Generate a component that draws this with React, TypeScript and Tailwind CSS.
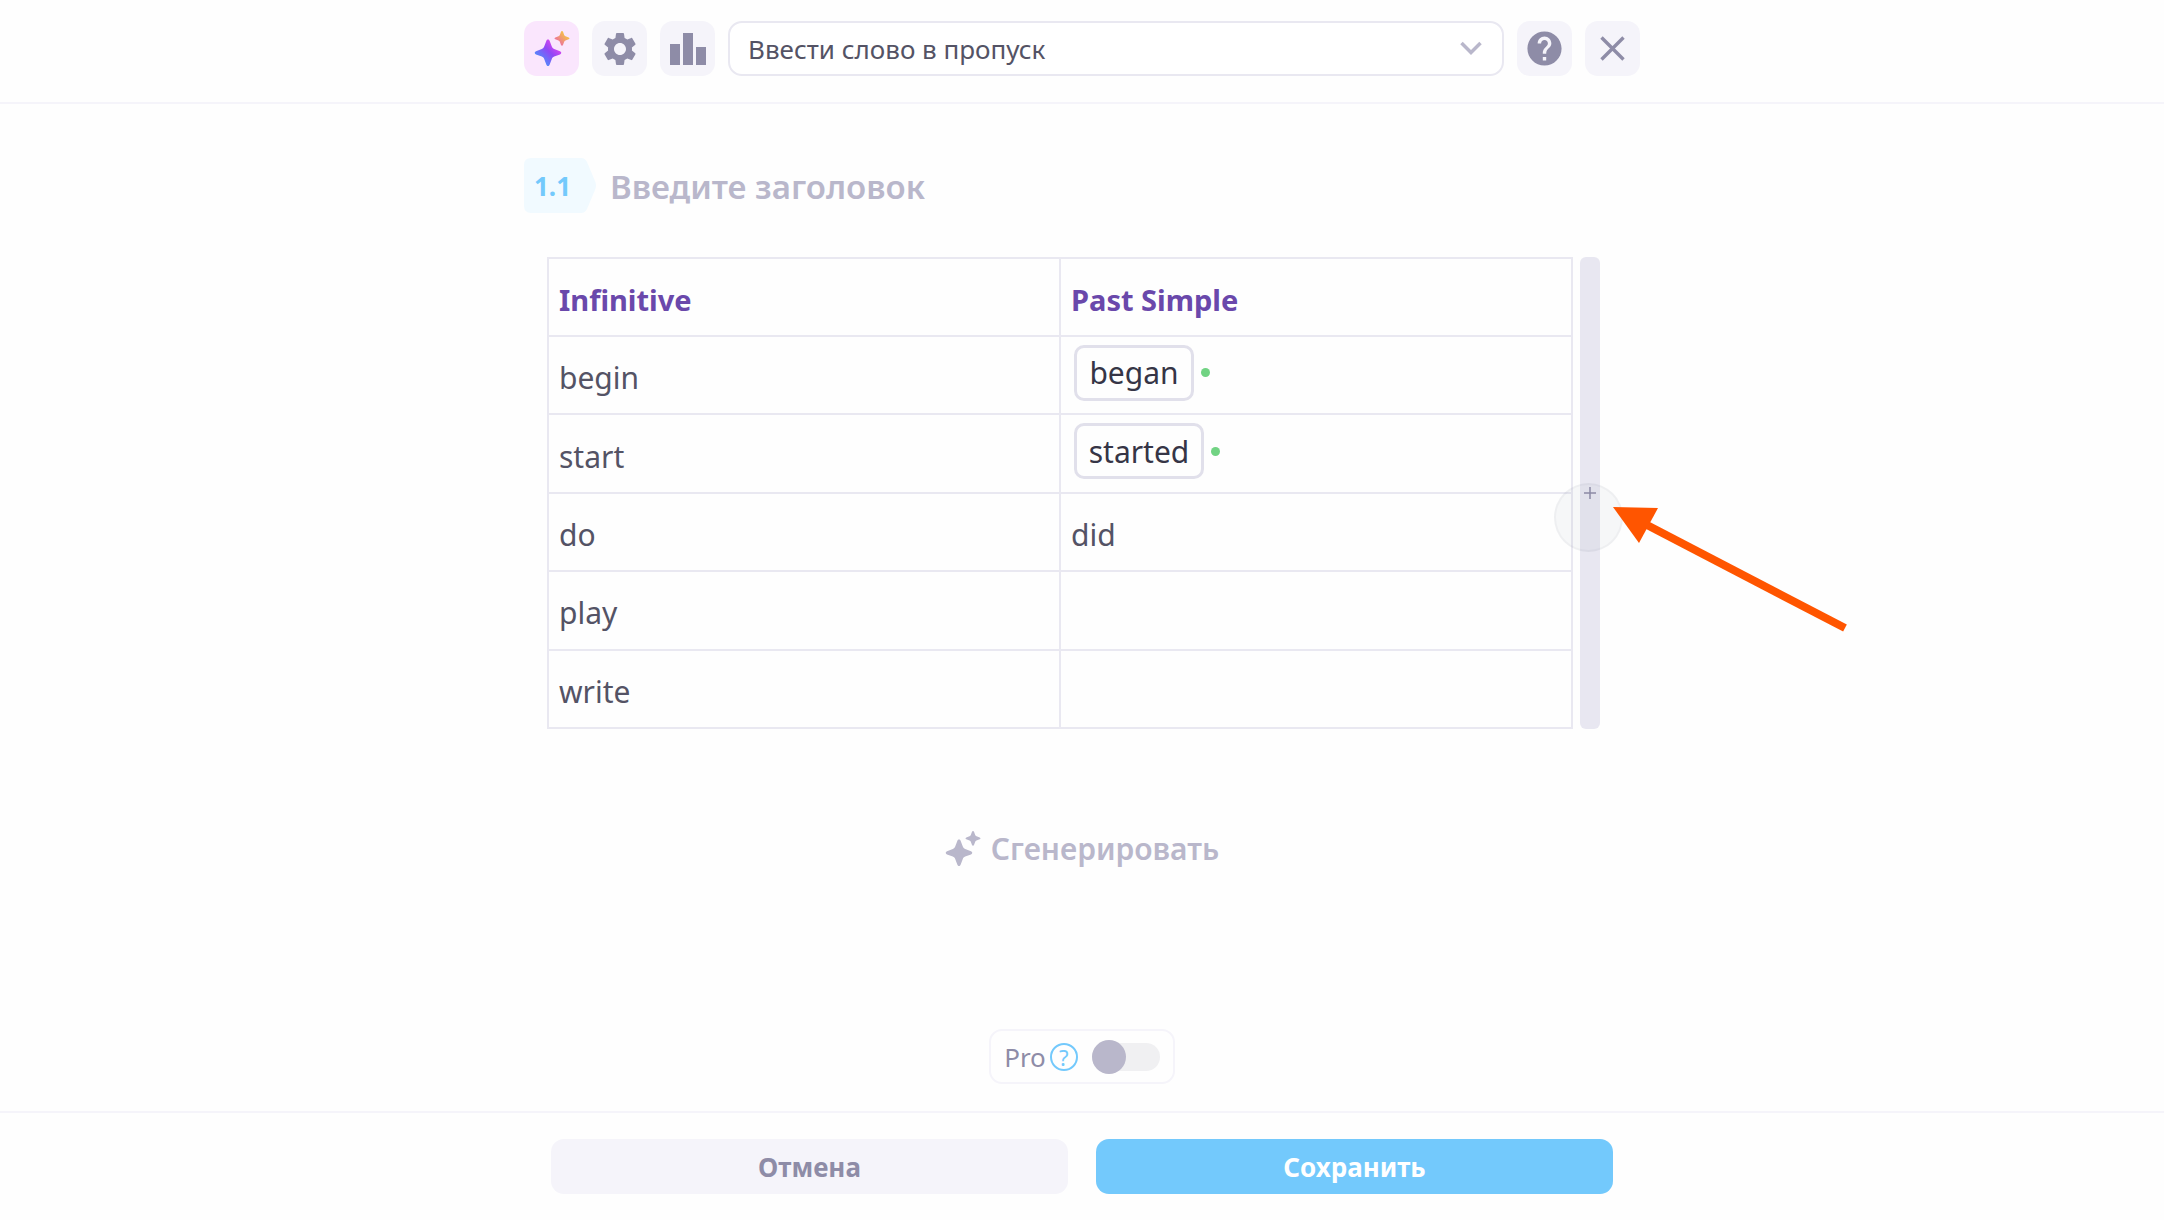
import { useState } from "react";
import type { ReactNode } from "react";

type Row = { infinitive: string; past: string; gap?: boolean };

const rows: Row[] = [
  { infinitive: "begin", past: "began", gap: true },
  { infinitive: "start", past: "started", gap: true },
  { infinitive: "do", past: "did" },
  { infinitive: "play", past: "" },
  { infinitive: "write", past: "" },
];

const iconColor = "#8e8ca7";

function IconButton({ label, className = "bg-[#f5f4fa]", children }: { label: string; className?: string; children: ReactNode }) {
  return (
    <button
      type="button"
      aria-label={label}
      className={`flex h-[55px] w-[55px] shrink-0 items-center justify-center rounded-[13px] ${className}`}
    >
      {children}
    </button>
  );
}

function Sparkles({ big, small }: { big: string; small: string }) {
  return (
    <svg width="36" height="36" viewBox="0 0 36 36" aria-hidden="true">
      <defs>
        <linearGradient id="spark-big" x1="0" y1="1" x2="1" y2="0">
          <stop offset="0.2" stopColor="#4f8dfb" />
          <stop offset="0.55" stopColor="#9147f5" />
          <stop offset="0.8" stopColor="#d946ef" />
        </linearGradient>
        <linearGradient id="spark-small" x1="0" y1="1" x2="1" y2="0">
          <stop offset="0.2" stopColor="#ec6f9f" />
          <stop offset="0.8" stopColor="#f5c542" />
        </linearGradient>
      </defs>
      <path
        d="M14 8.500c.8 0 1.300.5 1.600 1.300l2.200 5.800c.5 1.300 1.100 1.900 2.400 2.400l5.800 2.200c1.700.6 1.700 2.600 0 3.200l-5.800 2.200c-1.300.5-1.900 1.100-2.400 2.400l-2.200 5.800c-.6 1.700-2.600 1.700-3.200 0l-2.200-5.800c-.5-1.300-1.100-1.900-2.400-2.400l-5.800-2.200c-1.700-.6-1.700-2.600 0-3.200l5.800-2.200c1.300-.5 1.900-1.100 2.400-2.400l2.200-5.800c.3-.8.8-1.300 1.600-1.300z"
        fill={big}
      />
      <path
        d="M28 0c.5 0 .8.300 1 .800l1.200 3.200c.3.700.6 1 1.300 1.300l3.200 1.200c1 .4 1 1.400 0 1.800l-3.200 1.200c-.7.300-1 .6-1.300 1.300l-1.200 3.200c-.4 1-1.600 1-2 0l-1.200-3.200c-.3-.7-.6-1-1.300-1.300l-3.200-1.200c-1-.4-1-1.400 0-1.800l3.200-1.200c.7-.3 1-.6 1.300-1.300l1.200-3.200c.2-.5.5-.8 1-.8z"
        fill={small}
      />
    </svg>
  );
}

function Header() {
  return (
    <header className="border-b-2 border-[#f5f4fa] px-4 pt-[21px] pb-[26px]">
      <div className="mx-auto flex max-w-[1116px] items-center gap-[13px]">
        <IconButton label="Сгенерировать с ИИ" className="bg-[#fae6fd]">
          <Sparkles big="url(#spark-big)" small="url(#spark-small)" />
        </IconButton>
        <IconButton label="Настройки">
          <svg width="40" height="40" viewBox="0 0 24 24" fill={iconColor} aria-hidden="true">
            <path d="M19.140 12.940c.04-.3.060-.61.060-.94 0-.32-.02-.64-.07-.94l2.030-1.580c.18-.14.230-.41.120-.61l-1.920-3.320c-.12-.22-.37-.29-.59-.22l-2.390.96c-.5-.38-1.030-.7-1.620-.94l-.36-2.540c-.04-.24-.24-.41-.48-.41h-3.840c-.24 0-.43.170-.47.410l-.36 2.540c-.59.240-1.130.570-1.620.940l-2.390-.96c-.22-.08-.47 0-.59.220L2.740 8.870c-.12.210-.08.470.120.610l2.030 1.580c-.05.300-.09.630-.09.940s.02.640.07.940l-2.030 1.580c-.18.140-.23.410-.12.610l1.920 3.320c.12.220.37.290.59.220l2.390-.96c.5.380 1.030.7 1.620.940l.36 2.540c.05.240.24.410.48.410h3.840c.24 0 .44-.17.47-.41l.36-2.540c.59-.24 1.130-.56 1.620-.94l2.390.96c.22.080.47 0 .59-.22l1.920-3.320c.12-.22.070-.47-.12-.61l-2.010-1.580zM12 15.600c-1.980 0-3.600-1.620-3.600-3.600s1.620-3.600 3.600-3.600 3.600 1.620 3.600 3.600-1.620 3.600-3.600 3.600z" />
          </svg>
        </IconButton>
        <IconButton label="Статистика">
          <svg width="36" height="32" viewBox="0 0 36 32" fill={iconColor} aria-hidden="true">
            <path d="M0 11h10v21H0zM13 0h10v32H13zM26 14h10v18H26z" />
          </svg>
        </IconButton>
        <div className="relative min-w-0 flex-1">
          <select
            aria-label="Тип задания"
            className="h-[55px] w-full appearance-none rounded-[14px] border-2 border-[#e9e8f1] bg-white pt-[2px] pr-14 pl-[18px] text-[26px] text-[#545365]"
          >
            <option>Ввести слово в пропуск</option>
          </select>
          <svg className="pointer-events-none absolute top-[20px] right-[22px]" width="22" height="15" viewBox="0 0 22 15" fill="none" aria-hidden="true">
            <path d="M1.500 2l9.500 9.500L20.500 2" stroke="#b9b7cb" strokeWidth="3.500" />
          </svg>
        </div>
        <IconButton label="Помощь">
          <svg width="41" height="41" viewBox="0 0 24 24" fill={iconColor} aria-hidden="true">
            <path d="M12 2C6.480 2 2 6.480 2 12s4.480 10 10 10 10-4.480 10-10S17.520 2 12 2zm1 17h-2v-2h2v2zm2.070-7.750l-.9.920C13.450 12.900 13 13.500 13 15h-2v-.5c0-1.100.45-2.100 1.170-2.830l1.240-1.260c.37-.36.590-.86.590-1.410 0-1.100-.9-2-2-2s-2 .9-2 2H8c0-2.210 1.790-4 4-4s4 1.790 4 4c0 .88-.36 1.680-.93 2.250z" />
          </svg>
        </IconButton>
        <IconButton label="Закрыть">
          <svg width="25" height="25" viewBox="0 0 25 25" fill="none" aria-hidden="true">
            <path d="M1.500 1.500l22 22M23.500 1.500l-22 22" stroke={iconColor} strokeWidth="3.400" />
          </svg>
        </IconButton>
      </div>
    </header>
  );
}

function GapInput({ word }: { word: string }) {
  return (
    <div className="flex items-center gap-[7px] pb-[5px] pl-[3px]">
      <input
        aria-label="Правильный ответ"
        defaultValue={word}
        className={`h-[56px] rounded-[10px] border-[3px] border-[#e1e0eb] text-center text-[#363546] ${word.length > 5 ? "w-[130px]" : "w-[120px]"}`}
      />
      <span className="h-[9px] w-[9px] rounded-full bg-[#71d383]" />
    </div>
  );
}

function VerbTable() {
  return (
    <div className="relative mt-[44px] mr-10 ml-[23px] flex gap-[7px]">
      <div className="min-w-0 flex-1">
        <table className="h-[472px] w-full table-fixed border-collapse text-left text-[30px] leading-10 text-[#545365]">
          <thead>
            <tr className="h-[78px] text-[29px] text-[#6a48ab]">
              <th className="border-2 border-[#e9e8f1] px-[10px] pt-[6px] font-bold">Infinitive</th>
              <th className="border-2 border-[#e9e8f1] px-[10px] pt-[6px] font-bold">Past Simple</th>
            </tr>
          </thead>
          <tbody>
            {rows.map((row) => (
              <tr key={row.infinitive} className="h-[78px]">
                <td className="border-2 border-[#e9e8f1] px-[10px] pt-[6px]">{row.infinitive}</td>
                <td className="border-2 border-[#e9e8f1] px-[10px]">
                  {row.gap ? <GapInput word={row.past} /> : <p className="pt-[6px]">{row.past}</p>}
                </td>
              </tr>
            ))}
          </tbody>
        </table>
      </div>
      <button type="button" aria-label="Добавить столбец" className="flex w-5 items-center justify-center rounded-[6px] bg-[#e8e7f1]">
        <svg width="12" height="12" viewBox="0 0 12 12" aria-hidden="true">
          <path d="M6 0v12M0 6h12" stroke={iconColor} strokeWidth="1.500" />
        </svg>
      </button>

      {/* click highlight and the arrow pointing to it */}
      <span className="pointer-events-none absolute top-[226px] right-[-23px] h-[69px] w-[69px] rounded-full border-2 border-[#5a6478]/5 bg-[#5a6e8c]/5" />
      <svg className="pointer-events-none absolute top-[249px] left-full ml-[13px]" width="236" height="128" viewBox="0 0 236 128" aria-hidden="true">
        <path d="M0 1l45 1-19 35z" fill="#ff5500" />
        <path d="M34 19l198 103" stroke="#ff5500" strokeWidth="8" />
      </svg>
    </div>
  );
}

function ProSwitch() {
  const [pro, setPro] = useState(false);

  return (
    <div className="flex h-[55px] items-center rounded-[13px] border-2 border-[#f5f4fa] px-[13px]">
      <label htmlFor="pro" className="pt-[2px] text-[26px] text-[#8e8ca7]">
        Pro
      </label>
      <button
        type="button"
        aria-label="Что такое Pro"
        className="ml-1 flex h-[28px] w-[28px] items-center justify-center rounded-full border-2 border-[#73c9fc] text-[22px] leading-none text-[#73c9fc]"
      >
        ?
      </button>
      <span className="relative ml-[14px] flex h-[34px] w-[68px] items-center">
        <span className="h-[28px] w-full rounded-full bg-[#f0f0f2]" />
        <input
          id="pro"
          type="checkbox"
          role="switch"
          checked={pro}
          onChange={(e) => setPro(e.target.checked)}
          className="absolute left-0 h-[34px] w-[34px] appearance-none rounded-full bg-[#b9b7cb] checked:left-[34px] checked:bg-[#73c9fc]"
        />
      </span>
    </div>
  );
}

export default function App() {
  return (
    <div className="flex min-h-screen flex-col bg-[#fefefe] font-['Noto_Sans','Open_Sans',sans-serif]">
      <Header />

      <main className="mx-auto flex w-full max-w-[1116px] flex-1 flex-col pt-[54px] pb-[27px]">
        <div className="flex items-center">
          <div className="relative flex h-[55px] w-[72px] shrink-0 items-center pt-[2px] pl-[10px] text-[26px] font-bold text-[#73c9fc]">
            <svg className="absolute inset-0" width="72" height="55" viewBox="0 0 72 55" aria-hidden="true">
              <path d="M7 0h50q4 0 6 4l8 19q2 4.500 0 9l-8 19q-2 4-6 4H7q-7 0-7-7V7q0-7 7-7z" fill="#f1faff" />
            </svg>
            <span className="relative">1.1</span>
          </div>
          <input
            aria-label="Заголовок"
            placeholder="Введите заголовок"
            className="ml-[14px] min-w-0 flex-1 bg-transparent pt-[2px] text-[33px] leading-10 font-semibold placeholder:text-[#b9b7cb]"
          />
        </div>

        <VerbTable />

        <button type="button" className="mt-[96px] flex items-center gap-[10px] self-center text-[30px] leading-12 font-semibold text-[#b9b7cb]">
          <Sparkles big="#b9b7cb" small="#b9b7cb" />
          Сгенерировать
        </button>

        <div className="mt-auto self-center">
          <ProSwitch />
        </div>
      </main>

      <footer className="border-t-2 border-[#f5f4fa] px-4 pt-[26px] pb-[26px]">
        <div className="mx-auto grid max-w-[1062px] grid-cols-2 gap-7 text-[26px] font-bold">
          <button type="button" className="h-[55px] rounded-[13px] bg-[#f5f4fa] pt-[2px] text-[#8e8ca7]">
            Отмена
          </button>
          <button type="button" className="h-[55px] rounded-[13px] bg-[#73c9fc] pt-[2px] text-white">
            Сохранить
          </button>
        </div>
      </footer>
    </div>
  );
}
